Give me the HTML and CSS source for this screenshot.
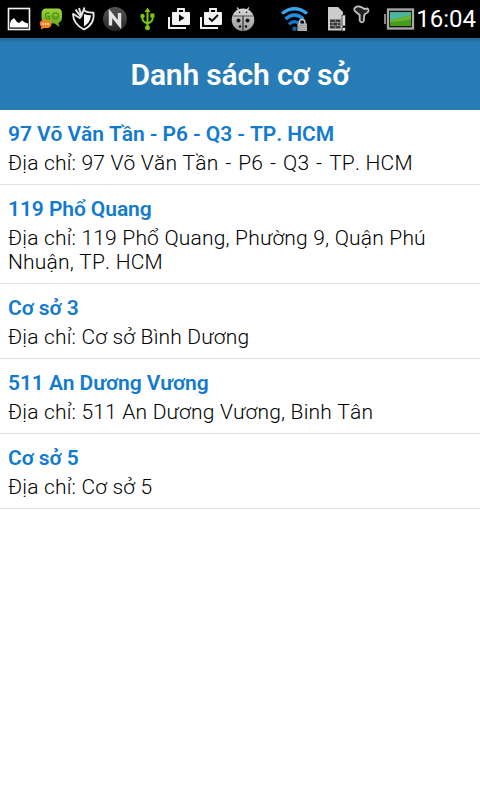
FILE: index.html
```html
<!doctype html>
<html lang="vi">
  <head>
    <meta charset="utf-8" />
    <meta name="viewport" content="width=device-width, initial-scale=1.0" />
    <title>Danh sách cơ sở</title>
    <link rel="stylesheet" href="styles.css">
  </head>

  <body>
    <div class="status_bar">
      <div class="notifications">
        <!-- picture -->
        <svg width="32" height="38" viewBox="0 0 32 38">
          <rect x="5.500" y="8.500" width="21" height="21" fill="#000" stroke="#f4f4f4" stroke-width="1.600" />
          <path d="M7 27.500v-4l1-3 3-2.500 3 4 2 1 3-2.500 3 2 3 1v4z" fill="#fff" />
        </svg>
        <!-- chat bubbles -->
        <svg width="32" height="38" viewBox="0 0 32 38">
          <defs>
            <linearGradient id="green" x2="0" y2="1">
              <stop offset="0" stop-color="#9bd43b" />
              <stop offset="1" stop-color="#64a81b" />
            </linearGradient>
          </defs>
          <path d="M10 8.500h14q3 1 3 5v4q0 4-3.500 5.500l1 4-5-3.500h-9q-4-1-4-6v-4q0-4 3.500-5z" fill="url(#green)" />
          <path d="M14.500 12.800h-2q-2 0-2 3t2 3h2v-2.300h-2" fill="none" stroke="#4f8f18" stroke-width="1.300" />
          <circle cx="20.500" cy="15.800" r="3" fill="none" stroke="#4f8f18" stroke-width="1.300" />
          <path d="M18.500 16.300q2 2 4 0" fill="none" stroke="#4f8f18" />
          <path d="M8 20h5q3.500 1 3.500 4T13 28H9l-3 1.500.400-3Q4.500 25.500 4.700 23 5 20.500 8 20z" fill="#f58220" />
          <path d="M7.500 24h1.500M10 24h1.500M12.500 24h1.500" stroke="#fff" stroke-width="1.400" />
        </svg>
        <!-- shield -->
        <svg width="32" height="38" viewBox="0 0 32 38">
          <path d="M6 14q0 10 11 15.500Q28 24 26.500 12.500 21 13 17 10.500" fill="none" stroke="#eee" stroke-width="1.700" />
          <path d="M17 14q3.500 1.500 7 1.300-.5 7.200-7 11.200z" fill="#f5f5f5" />
          <path d="M5.500 13.500l8 5M8.500 9.500l6 8M12 8l2.500 8M17.500 7.500l-3 8" stroke="#e6e6e6" stroke-width="2" />
        </svg>
        <!-- N badge -->
        <svg width="32" height="38" viewBox="0 0 32 38">
          <defs>
            <linearGradient id="badge" x2="0" y2="1">
              <stop offset="0" stop-color="#555" />
              <stop offset="1" stop-color="#262626" />
            </linearGradient>
          </defs>
          <circle cx="16" cy="19" r="12" fill="url(#badge)" />
          <path d="M11.500 25.500V13.500L20.500 24.500V13" fill="none" stroke="#e4e4e4" stroke-width="3.400" />
        </svg>
        <!-- usb -->
        <svg width="32" height="38" viewBox="0 0 32 38">
          <path d="M16.500 10v18M11.500 16v3q0 2.500 5 4.500M21.500 15v4q0 2.500-5 4.500" fill="none" stroke="#7ac70c" stroke-width="2" />
          <g fill="#7ac70c">
            <path d="M16.500 7.500l3 4.500h-6zM19.300 13.500h4.200v4h-4.200z" />
            <circle cx="11.500" cy="16" r="2.200" />
            <circle cx="16.500" cy="27.700" r="2.500" />
          </g>
        </svg>
        <!-- store bag, play -->
        <svg width="32" height="38" viewBox="0 0 32 38">
          <path d="M6 17v11h17" fill="none" stroke="#f2f2f2" stroke-width="2" />
          <path d="M15 13V9h6v4" fill="none" stroke="#f2f2f2" stroke-width="1.800" />
          <rect x="9" y="12" width="18" height="13" rx="1" fill="#f2f2f2" />
          <path d="M16 14.500v7l5.500-3.500z" fill="#000" />
        </svg>
        <!-- store bag, check -->
        <svg width="32" height="38" viewBox="0 0 32 38">
          <path d="M6 17v11h17" fill="none" stroke="#f2f2f2" stroke-width="2" />
          <path d="M15 13V9h6v4" fill="none" stroke="#f2f2f2" stroke-width="1.800" />
          <rect x="9" y="12" width="18" height="13" rx="1" fill="#f2f2f2" />
          <path d="M14 18l3 3 6-6" fill="none" stroke="#000" stroke-width="1.800" />
        </svg>
        <!-- ladybug -->
        <svg width="32" height="38" viewBox="0 0 32 38">
          <defs>
            <linearGradient id="bug" x2="0" y2="1">
              <stop offset="0" stop-color="#d8d8d8" />
              <stop offset="1" stop-color="#999" />
            </linearGradient>
          </defs>
          <path d="M12 10l-2-2.500M20 10l2-2.500" stroke="#bbb" stroke-width="1.500" />
          <circle cx="16" cy="19.700" r="11.300" fill="url(#bug)" />
          <path d="M6 16h20" stroke="#555" />
          <path d="M16 16v15" stroke="#333" stroke-width="1.200" />
          <g fill="#111">
            <circle cx="12.500" cy="12.300" r=".8" />
            <circle cx="19.500" cy="12.300" r=".8" />
            <circle cx="11.500" cy="20.500" r="2" />
            <circle cx="20.500" cy="20.500" r="2" />
            <circle cx="13" cy="26.500" r="1.200" />
            <circle cx="19" cy="26.500" r="1.200" />
          </g>
        </svg>
      </div>

      <div class="system_icons">
        <!-- wifi, locked -->
        <svg width="28" height="38" viewBox="0 0 28 38">
          <g fill="none" stroke-width="3.300">
            <path d="M1 13.500q12.500-9.500 25 0" stroke="#35a6ee" />
            <path d="M4.500 19q9-8 18 0" stroke="#2290e2" />
            <path d="M8 24.300q5.500-5.500 11 0" stroke="#1879c8" />
          </g>
          <circle cx="13.500" cy="28.700" r="2.300" fill="#1565a8" />
          <path d="M18.500 24v-2q0-2.500 2.700-2.500t2.700 2.500v2" fill="none" stroke="#ccc" stroke-width="1.500" />
          <rect x="16.500" y="23.500" width="9.500" height="7.500" fill="#b5b5b5" />
          <path d="M16.500 25.500H26M16.500 27.500H26M16.500 29.500H26" stroke="#999" stroke-width=".7" />
        </svg>
        <!-- sim card -->
        <svg class="sim" width="18" height="38" viewBox="0 0 18 38">
          <path d="M-.5 7H10l5 5v18.500H-.5z" fill="#ccc" />
          <rect x="2" y="19.500" width="10.500" height="9" fill="#333" />
          <path d="M2 22.500h3M2 25.500h3M9.500 22.500h3M9.500 25.500h3M7.300 19.500v2M7.300 26.500v2M5 22.200h4.500v3.700H5z" fill="none" stroke="#aaa" stroke-width=".8" />
          <path d="M14 15h3.500v11H14zM14 27.500h3.500V31H14z" fill="#ddd" stroke="#111" stroke-width=".7" />
        </svg>
        <!-- handset -->
        <svg class="handset" width="17" height="38" viewBox="0 0 17 38">
          <path d="M1.300 8.500Q3 6.200 6 6.500q3 .5 5.500 2.500l3-.5q1.300.5 1 2.500-.5 2-3.500 3l-1 2v4.500q-.7 2-2.500 1.800-1.500-.3-1.800-2V15L3 12Q1 10.500 1.300 8.500z" fill="#222" stroke="#c0c0c0" stroke-width="1.800" />
        </svg>
        <!-- battery -->
        <svg class="battery" width="31" height="38" viewBox="0 0 31 38">
          <defs>
            <linearGradient id="charge" x2="0" y2="1">
              <stop offset="0" stop-color="#3a9f6e" />
              <stop offset="1" stop-color="#4a9b08" />
            </linearGradient>
          </defs>
          <path d="M1 14v10" stroke="#888" stroke-width="2" />
          <rect x="4" y="9.500" width="25" height="19" fill="#111" stroke="#aaa" stroke-width="2.300" />
          <rect x="6" y="12" width="21" height="14" fill="url(#charge)" />
          <path d="M6 12.500h21V15Q16 18 6 20z" fill="#4cb5a0" />
          <path d="M6 20q11-2 21-5v4Q17 22 6 22z" fill="#69b82b" />
        </svg>
        <span class="clock">16:04</span>
      </div>
    </div>

    <div class="header">Danh sách cơ sở</div>

    <div class="branch_list">
      <div class="branch">
        <div class="branch_name">97 Võ Văn Tần - P6 - Q3 - TP. HCM</div>
        <div class="branch_address">Địa chỉ: 97 Võ Văn Tần <span class="dash">-</span> P6 <span class="dash">-</span> Q3 <span class="dash">-</span> TP. HCM</div>
      </div>
      <div class="branch">
        <div class="branch_name">119 Phổ Quang</div>
        <div class="branch_address">Địa chỉ: 119 Phổ Quang, Phường 9, Quận Phú Nhuận, TP. HCM</div>
      </div>
      <div class="branch">
        <div class="branch_name">Cơ sở 3</div>
        <div class="branch_address">Địa chỉ: Cơ sở Bình Dương</div>
      </div>
      <div class="branch">
        <div class="branch_name">511 An Dương Vương</div>
        <div class="branch_address">Địa chỉ: 511 An Dương Vương, Binh Tân</div>
      </div>
      <div class="branch">
        <div class="branch_name">Cơ sở 5</div>
        <div class="branch_address">Địa chỉ: Cơ sở 5</div>
      </div>
    </div>
  </body>
</html>
```
FILE: styles.css
```css
body {
  margin: 0;
  background-color: #fff;
  font-family: Roboto, "Noto Sans", sans-serif;
  font-kerning: none;
}

.status_bar {
  display: flex;
  justify-content: space-between;
  height: 38px;
  padding: 0 4px 0 3px;
  background-color: #000;
}

.notifications,
.system_icons {
  display: flex;
}

.notifications svg,
.system_icons svg {
  flex: none;
}

.sim {
  margin-left: 19px;
}

.handset {
  margin-left: 7px;
}

.battery {
  margin-left: 14px;
}

.clock {
  width: 61px;
  color: #fff;
  font-size: 24px;
  line-height: 39px;
  text-align: right;
  white-space: nowrap;
}

.header {
  height: 72px;
  background: linear-gradient(#216593, #277ab2 4px, #287cb5 8px);
  color: #fff;
  font-size: 30px;
  font-weight: 600;
  letter-spacing: -0.15px;
  line-height: 73px;
  text-align: center;
}

.branch {
  padding: 12px 8px 9px;
  border-bottom: 1px solid #e0e0e0;
}

.branch_name {
  margin-bottom: 5px;
  color: #127bd0;
  font-size: 21px;
  font-weight: 600;
  letter-spacing: -0.08px;
  line-height: 24px;
}

.branch_address {
  color: #000;
  font-size: 21px;
  font-weight: 360;
  letter-spacing: 0.19px;
  line-height: 24px;
}

.dash {
  padding: 0 1.5px;
}
```
